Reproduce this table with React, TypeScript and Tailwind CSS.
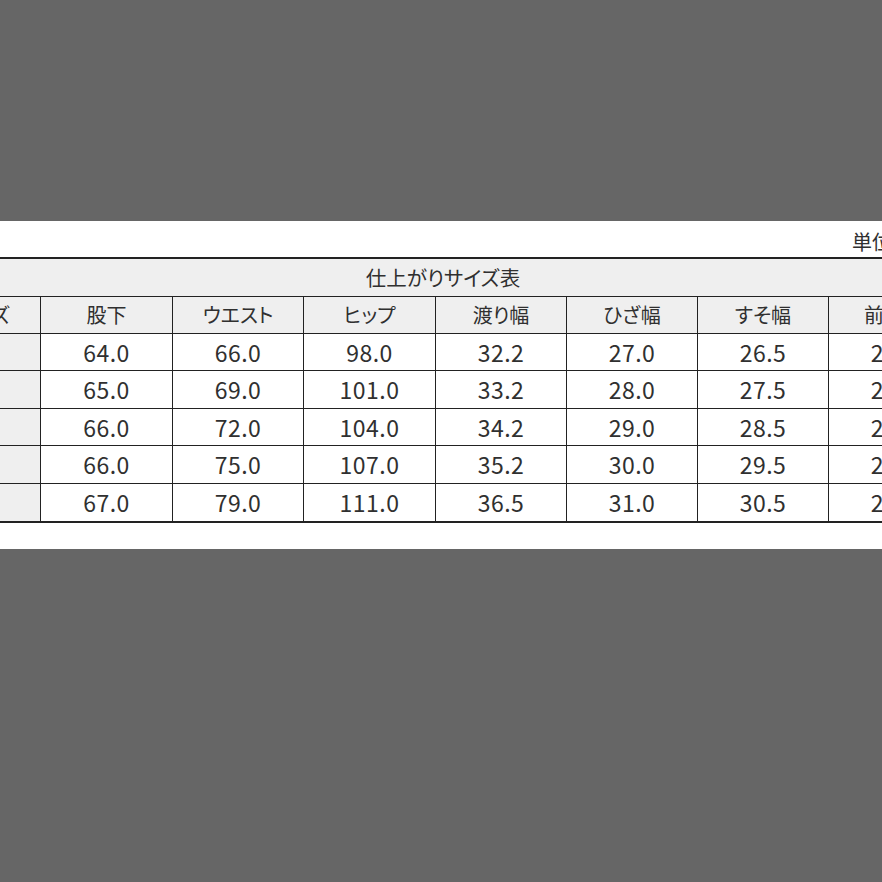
import React from "react";

const headers = ["サイズ", "股下", "ウエスト", "ヒップ", "渡り幅", "ひざ幅", "すそ幅", "前股上"];
const rows = [
  ["", "64.0", "66.0", "98.0", "32.2", "27.0", "26.5", "25.5"],
  ["", "65.0", "69.0", "101.0", "33.2", "28.0", "27.5", "26.0"],
  ["", "66.0", "72.0", "104.0", "34.2", "29.0", "28.5", "26.5"],
  ["", "66.0", "75.0", "107.0", "35.2", "30.0", "29.5", "27.0"],
  ["", "67.0", "79.0", "111.0", "36.5", "31.0", "30.5", "27.5"],
];
const rowH = ["h-[37px]", "h-[38px]", "h-[37px]", "h-[38px]", "h-[37px]"];

export default function App() {
  return (
    <div className="min-h-[882px] bg-[#666666] pt-[221px] font-['Noto_Sans_CJK_JP',sans-serif] text-[#303030] [font-feature-settings:'palt']">
      <div className="h-[328px] overflow-hidden bg-white">
        <div className="ml-[-75px] w-[1036px]">
          <div className="h-[36px] pl-[927px] text-[20px] leading-[42px] whitespace-nowrap">単位：cm</div>
          <div className="border-t-[2.5px] border-b-[2.5px] border-[#222]">
            <div className="flex h-[38px] items-center justify-center whitespace-nowrap border-b-[1.5px] border-[#222] bg-[#efefef] text-[20.5px]">
              仕上がりサイズ表
            </div>
            <div className="grid h-[37px] grid-cols-[116px_132px_131px_132px_131px_131px_131px_131px] bg-[#efefef] border-b-[1.5px] border-[#222]">
              {headers.map((h, i) => (
                <div key={i} className="flex h-full items-center justify-center overflow-hidden whitespace-nowrap border-r-[1.5px] border-[#222] text-[20px]">
                  {h}
                </div>
              ))}
            </div>
            {rows.map((r, ri) => (
              <div
                key={ri}
                className={`grid ${rowH[ri]} grid-cols-[116px_132px_131px_132px_131px_131px_131px_131px] ${ri < rows.length - 1 ? "border-b-[1.5px] border-[#222]" : ""}`}
              >
                {r.map((c, ci) => (
                  <div
                    key={ci}
                    className={`flex h-full items-center justify-center overflow-hidden whitespace-nowrap border-r-[1.5px] border-[#222] text-[23px] tracking-[0.5px] ${ci === 0 ? "bg-[#efefef]" : "bg-white"}`}
                  >
                    {c}
                  </div>
                ))}
              </div>
            ))}
          </div>
        </div>
      </div>
    </div>
  );
}
